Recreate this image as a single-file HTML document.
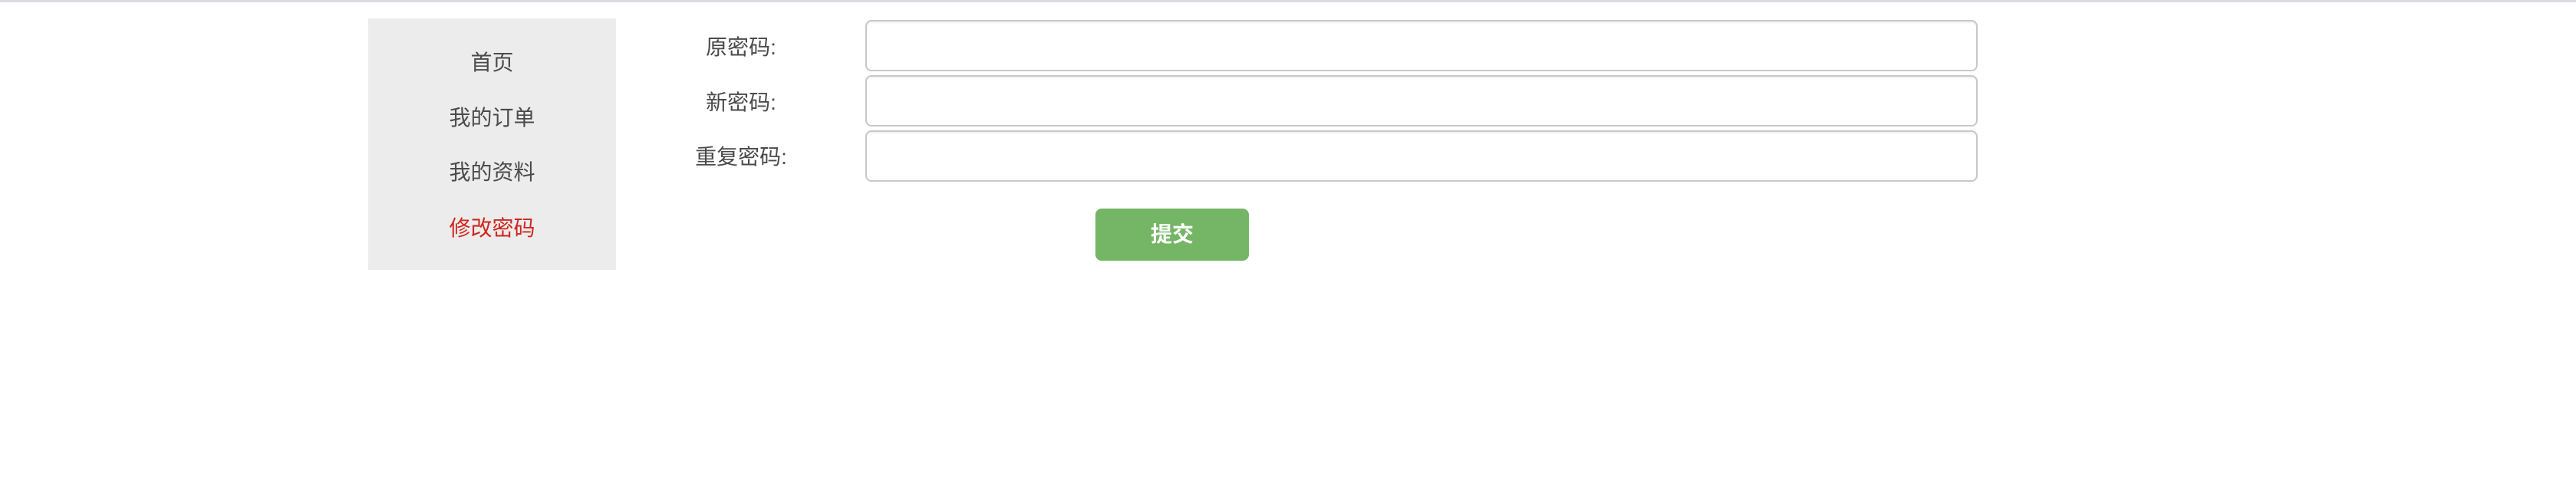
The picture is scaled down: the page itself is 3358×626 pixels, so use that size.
<!DOCTYPE html>
<html><head><meta charset="utf-8">
<style>
html,body{margin:0;padding:0;width:3358px;height:626px;background:#fff;overflow:hidden;
font-family:"Liberation Sans","Noto Sans CJK SC",sans-serif;}
.top{position:absolute;left:0;top:0;width:3358px;height:3px;background:#dcdce0;}
.side{position:absolute;left:480px;top:24px;width:323px;height:328px;background:#ececec;}
.mi{position:absolute;left:0;width:323px;text-align:center;font-size:28px;color:#4a4a4a;line-height:40px;}
.lab{position:absolute;left:866px;width:200px;text-align:center;font-size:28px;color:#4a4a4a;line-height:40px;}
.inp{position:absolute;left:1128px;width:1446px;height:63px;border:2px solid #c8c8c8;border-radius:8px;box-sizing:content-box;box-shadow:inset 0 2px 2px rgba(0,0,0,0.06);}
.btn{position:absolute;left:1428px;top:272px;width:200px;height:68px;background:#74b566;border-radius:8px;color:#fff;font-size:28px;font-weight:bold;text-align:center;line-height:68px;}
</style></head><body>
<div class="top"></div>
<div class="side">
<div class="mi" style="top:38px">首页</div>
<div class="mi" style="top:110px">我的订单</div>
<div class="mi" style="top:181px">我的资料</div>
<div class="mi" style="top:254px;color:#d0261f">修改密码</div>
</div>
<div class="lab" style="top:42px">原密码:</div>
<div class="lab" style="top:114px">新密码:</div>
<div class="lab" style="top:185px">重复密码:</div>
<div class="inp" style="top:26px"></div>
<div class="inp" style="top:98px"></div>
<div class="inp" style="top:170px"></div>
<div class="btn">提交</div>
</body></html>
